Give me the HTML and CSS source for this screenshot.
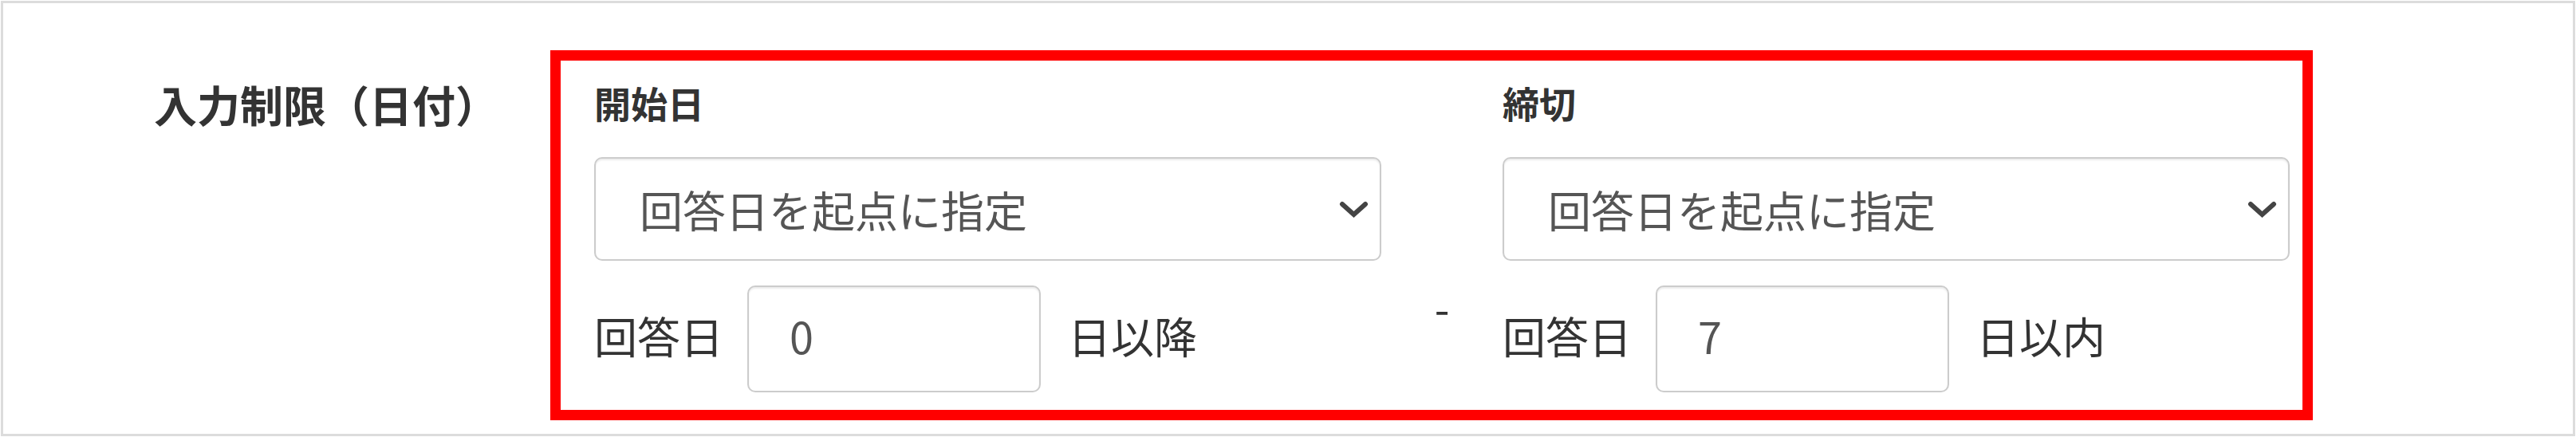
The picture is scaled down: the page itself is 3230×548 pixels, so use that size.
FILE: index.html
```html
<!DOCTYPE html>
<html lang="ja">
  <head>
    <meta charset="UTF-8" />
    <meta name="viewport" content="width=device-width, initial-scale=1.0" />
    <title>入力制限（日付）</title>
    <link rel="stylesheet" href="styles.css">
  </head>
  <body>
    <div class="panel">
      <div class="field-label">入力制限（日付）</div>

      <div class="date-box">
        <div class="range">
          <div class="col-title">開始日</div>
          <div class="col-title col-right">締切</div>

          <div class="select-wrap">
            <select class="select">
              <option>回答日を起点に指定</option>
            </select>
            <svg class="chevron" viewBox="0 0 37 21" aria-hidden="true">
              <polyline points="4,4 18.5,17 33,4" />
            </svg>
          </div>
          <div class="select-wrap col-right">
            <select class="select">
              <option>回答日を起点に指定</option>
            </select>
            <svg class="chevron" viewBox="0 0 37 21" aria-hidden="true">
              <polyline points="4,4 18.5,17 33,4" />
            </svg>
          </div>

          <div class="day-row">
            <span>回答日</span>
            <input class="num" type="text" value="0">
            <span>日以降</span>
          </div>
          <div class="range-sep">-</div>
          <div class="day-row">
            <span>回答日</span>
            <input class="num" type="text" value="7">
            <span>日以内</span>
          </div>
        </div>
      </div>
    </div>
  </body>
</html>
```

FILE: styles.css
```css
* {
  box-sizing: border-box;
  margin: 0;
  padding: 0;
}

body {
  font-family: "Noto Sans CJK JP", sans-serif;
  color: #333;
  background: #fff;
}

.panel {
  height: 546px;
  margin: 1px;
  border: 3px solid #dcdcdc;
  display: flex;
  align-items: flex-start;
  padding-top: 59px;
}

.field-label {
  width: 686px;
  padding-left: 189px;
  padding-top: 41px;
  font-size: 54px;
  font-weight: bold;
  line-height: 1;
  white-space: nowrap;
}

.date-box {
  width: 2210px;
  border: 13px solid #ff0000;
  padding: 29px 16px 22px 42px;
}

.range {
  display: grid;
  grid-template-columns: 987px 152px 987px;
}

.col-right {
  grid-column: 3;
}

.col-title {
  font-size: 46px;
  font-weight: bold;
  line-height: 46px;
}

.select-wrap {
  position: relative;
  margin-top: 46px;
  grid-row: 2;
}

.select {
  display: block;
  width: 100%;
  height: 130px;
  appearance: none;
  -webkit-appearance: none;
  border: 2px solid #cccccc;
  border-radius: 10px;
  box-shadow: inset 0 2px 2px rgba(0, 0, 0, 0.08);
  background: #fff;
  padding: 0 80px 0 55px;
  font-family: inherit;
  font-size: 54px;
  color: #555;
}

.chevron {
  position: absolute;
  right: 16px;
  top: 55px;
  width: 37px;
  height: 21px;
  pointer-events: none;
}

.chevron polyline {
  fill: none;
  stroke: #444;
  stroke-width: 6;
  stroke-linecap: round;
  stroke-linejoin: miter;
}

.day-row {
  grid-row: 3;
  margin-top: 31px;
  display: flex;
  align-items: center;
  font-size: 54px;
  line-height: 1;
}

.day-row span {
  padding-bottom: 8px;
  white-space: nowrap;
}

.num {
  width: 368px;
  height: 134px;
  margin: 0 34px 0 30px;
  border: 2px solid #cccccc;
  border-radius: 10px;
  box-shadow: inset 0 2px 2px rgba(0, 0, 0, 0.08);
  padding: 0 0 10px 51px;
  font-family: inherit;
  font-size: 54px;
  color: #555;
}

.range-sep {
  grid-row: 3;
  grid-column: 2;
  align-self: start;
  margin-top: 31px;
  text-align: center;
  font-size: 54px;
  line-height: 1;
}
```
